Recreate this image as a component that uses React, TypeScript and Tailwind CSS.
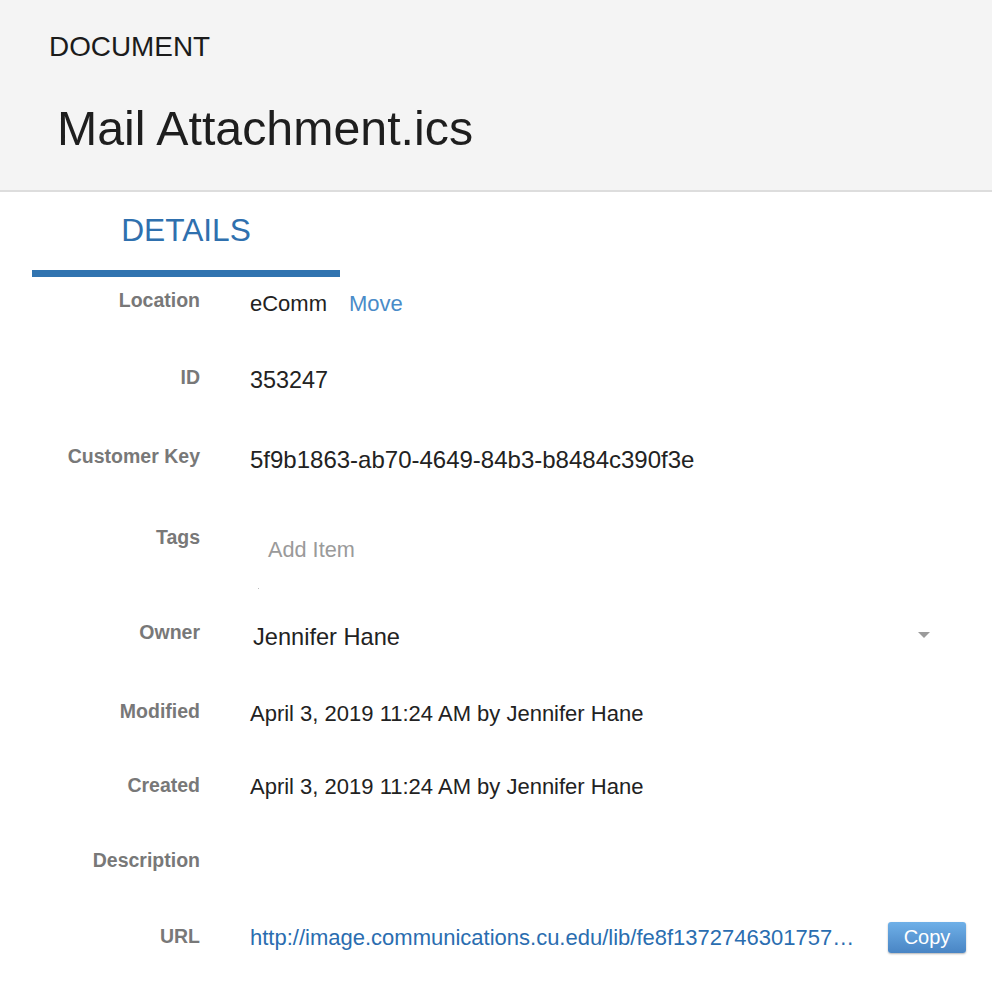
import { ReactNode } from "react";

type Row = {
  label: string;
  height: string;
  valueTop: string;
  value: ReactNode;
};

const rows: Row[] = [
  {
    label: "Location",
    height: "h-[77px]",
    valueTop: "mt-[4px]",
    value: (
      <div className="flex text-[22px] leading-[24px]">
        <span className="text-[#222]">eComm</span>
        <a className="ml-[22px] text-[#4a8bc8] cursor-pointer">Move</a>
      </div>
    ),
  },
  {
    label: "ID",
    height: "h-[79px]",
    valueTop: "mt-[3px]",
    value: <div className="text-[23.4px] leading-[24px] text-[#222]">353247</div>,
  },
  {
    label: "Customer Key",
    height: "h-[81px]",
    valueTop: "mt-[4px]",
    value: (
      <div className="text-[24px] leading-[24px] text-[#222]">
        5f9b1863-ab70-4649-84b3-b8484c390f3e
      </div>
    ),
  },
  {
    label: "Tags",
    height: "h-[95px]",
    valueTop: "mt-[13px]",
    value: (
      <div>
        <div className="pl-[18px] text-[21.7px] leading-[24px] text-[#9a9a9a]">Add Item</div>
        <div className="mt-[26px] ml-[8px] w-px h-px bg-[#bbbbbb]" />
      </div>
    ),
  },
  {
    label: "Owner",
    height: "h-[79px]",
    valueTop: "mt-[5px]",
    value: (
      <div className="flex w-[690px] items-center justify-between pl-[3px] pr-[10px] cursor-pointer">
        <span className="text-[23.6px] leading-[24px] text-[#222]">Jennifer Hane</span>
        <svg width="12" height="6" viewBox="0 0 12 6" className="-mt-[4px]">
          <path d="M0 0H12L6 6Z" fill="#9b9b9b" />
        </svg>
      </div>
    ),
  },
  {
    label: "Modified",
    height: "h-[74px]",
    valueTop: "mt-[3px]",
    value: (
      <div className="text-[22px] leading-[24px] text-[#222]">
        April 3, 2019 11:24 AM by Jennifer Hane
      </div>
    ),
  },
  {
    label: "Created",
    height: "h-[75px]",
    valueTop: "mt-[2px]",
    value: (
      <div className="text-[22px] leading-[24px] text-[#222]">
        April 3, 2019 11:24 AM by Jennifer Hane
      </div>
    ),
  },
  {
    label: "Description",
    height: "h-[76px]",
    valueTop: "mt-0",
    value: null,
  },
  {
    label: "URL",
    height: "h-[50px]",
    valueTop: "-mt-[2px]",
    value: (
      <div className="flex items-center">
        <a className="w-[638px] whitespace-nowrap text-[22px] leading-[24px] text-[#2a6db0] cursor-pointer">
          http://image.communications.cu.edu/lib/fe8f1372746301757…
        </a>
        <button className="w-[78px] h-[31px] rounded-[3px] bg-gradient-to-b from-[#6fb0e8] to-[#4985c4] text-[20px] leading-[31px] text-white shadow-[0_1px_2px_rgba(0,0,0,0.3)]">
          Copy
        </button>
      </div>
    ),
  },
];

export default function App() {
  return (
    <div className="min-h-screen bg-white font-['Liberation_Sans',Arial,Helvetica,sans-serif]">
      <header className="h-[192px] bg-[#f4f4f4] border-b-2 border-[#dddddd] pt-[33px] pl-[49px]">
        <div className="text-[27.9px] leading-[28px] text-[#1b1b1b]">DOCUMENT</div>
        <h1 className="mt-[43px] ml-[8px] text-[48.3px] leading-[48px] text-[#1e1e1e]">
          Mail Attachment.ics
        </h1>
      </header>

      <div className="pl-[32px]">
        <div className="w-[308px] pt-[23px]">
          <div className="text-center text-[31.7px] leading-[31px] text-[#2f70ae]">DETAILS</div>
          <div className="mt-[24px] h-[7px] bg-[#3174b0]" />
        </div>
      </div>

      <div className="pt-[11px]">
        {rows.map((r) => (
          <div key={r.label} className={`flex items-start ${r.height}`}>
            <div className="w-[200px] shrink-0 text-right text-[19.5px] leading-[24px] font-bold text-[#787878]">
              {r.label}
            </div>
            <div className={`ml-[50px] ${r.valueTop}`}>{r.value}</div>
          </div>
        ))}
      </div>
    </div>
  );
}
